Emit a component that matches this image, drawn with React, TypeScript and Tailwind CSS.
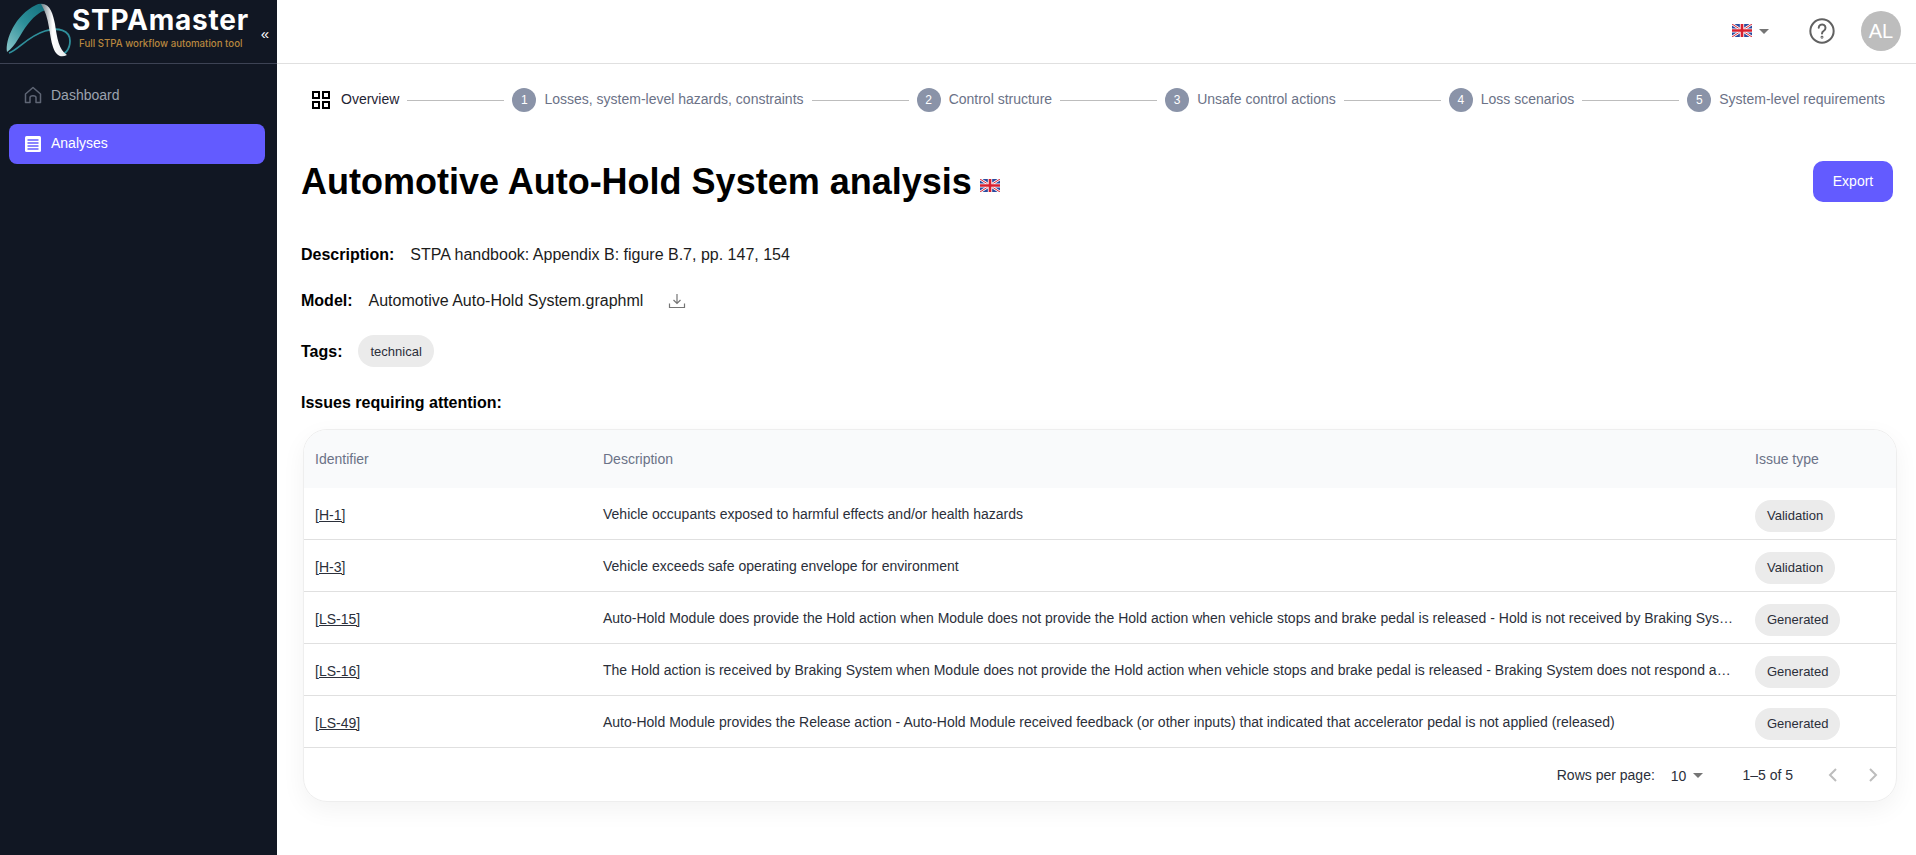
import React from "react";

const Flag = ({ w = 20, h = 13 }: { w?: number; h?: number }) => (
  <svg width={w} height={h} viewBox="0 0 60 40" preserveAspectRatio="none" className="block shrink-0">
    <rect width="60" height="40" fill="#2b4a9e" />
    <path d="M0 0L60 40M60 0L0 40" stroke="#fff" strokeWidth="8" />
    <path d="M0 0L60 40M60 0L0 40" stroke="#d8202f" strokeWidth="3" />
    <path d="M30 0V40M0 20H60" stroke="#fff" strokeWidth="13" />
    <path d="M30 0V40M0 20H60" stroke="#d8202f" strokeWidth="8" />
  </svg>
);

const Logo = () => (
  <div className="flex items-start h-full">
    <svg width="72" height="60" viewBox="0 0 72 60" className="block shrink-0">
      <defs>
        <linearGradient id="lg1" x1="0" y1="1" x2="1" y2="0">
          <stop offset="0" stopColor="#8cc8cb" />
          <stop offset="0.5" stopColor="#2d8f99" />
          <stop offset="1" stopColor="#0f6a78" />
        </linearGradient>
        <linearGradient id="lg2" x1="0" y1="0" x2="1" y2="0">
          <stop offset="0" stopColor="#6f7c84" />
          <stop offset="0.45" stopColor="#ffffff" />
          <stop offset="1" stopColor="#e4e8ea" />
        </linearGradient>
      </defs>
      <path d="M9 53C18 50 28 36 45 31C58 27 70 30 70 41C70 50 64 55 60 55" fill="none" stroke="#2f8f9b" strokeWidth="1.8" />
      <path d="M7 52C5 40 15 15 36 5C40 3 46 3 50 10C44 9 36 14 28 24C20 34 16 46 7 52Z" fill="url(#lg1)" />
      <path d="M41 4C50 3 53 14 55 24C57 38 59 50 67 55C61 58 56 56 53 47C49 36 50 18 41 4Z" fill="url(#lg2)" />
    </svg>
    <div className="flex flex-col pt-[6px] font-['Inter',sans-serif]">
      <span className="text-[28px] font-bold text-white tracking-[0.75px] leading-[28px] whitespace-nowrap">STPAmaster</span>
      <span className="text-[9.7px] font-medium text-[#b8873f] mt-[4px] ml-[7px] leading-[12px] whitespace-nowrap">Full STPA workflow automation tool</span>
    </div>
  </div>
);

const steps = [
  "Losses, system-level hazards, constraints",
  "Control structure",
  "Unsafe control actions",
  "Loss scenarios",
  "System-level requirements",
];

const Stepper = () => (
  <div className="flex items-center h-[24px] pl-[311px] pr-[31px]">
    <svg width="20" height="20" viewBox="0 0 20 20" className="shrink-0" fill="none" stroke="#000" strokeWidth="2">
      <rect x="2" y="2" width="6" height="6" />
      <rect x="12" y="2" width="6" height="6" />
      <rect x="2" y="12" width="6" height="6" />
      <rect x="12" y="12" width="6" height="6" />
    </svg>
    <span className="ml-[10px] -mt-[2px] text-sm text-[#1f2433] whitespace-nowrap">Overview</span>
    {steps.map((s, i) => (
      <React.Fragment key={s}>
        <div className="flex-1 h-px bg-[#bdbdbd] mx-[8px]" />
        <div className="w-[24px] h-[24px] rounded-full bg-[#8a93a8] text-white text-xs flex items-center justify-center shrink-0">{i + 1}</div>
        <span className="ml-[8px] -mt-[2px] text-sm text-[#6b7287] whitespace-nowrap">{s}</span>
      </React.Fragment>
    ))}
  </div>
);

const rows = [
  ["[H-1]", "Vehicle occupants exposed to harmful effects and/or health hazards", "Validation"],
  ["[H-3]", "Vehicle exceeds safe operating envelope for environment", "Validation"],
  ["[LS-15]", "Auto-Hold Module does provide the Hold action when Module does not provide the Hold action when vehicle stops and brake pedal is released - Hold is not received by Braking System when vehicle stops and brake pedal is released", "Generated"],
  ["[LS-16]", "The Hold action is received by Braking System when Module does not provide the Hold action when vehicle stops and brake pedal is released - Braking System does not respond adequately to the Hold action when it is received", "Generated"],
  ["[LS-49]", "Auto-Hold Module provides the Release action - Auto-Hold Module received feedback (or other inputs) that indicated that accelerator pedal is not applied (released)", "Generated"],
];

const Chip = ({ children }: { children: React.ReactNode }) => (
  <span className="inline-flex items-center h-[32px] px-[12px] pt-[1px] rounded-full bg-[#ebebeb] text-[13px] text-[#2b2f3a] whitespace-nowrap">{children}</span>
);

export default function App() {
  return (
    <div className="flex h-[855px] w-[1916px] overflow-hidden bg-white font-['Liberation_Sans',Arial,sans-serif]">
      <aside className="w-[277px] shrink-0 bg-[#111723] flex flex-col">
        <div className="h-[64px] border-b border-[#3d4354] flex items-center justify-between pr-[8px]">
          <Logo />
          <span className="text-white text-[15px] leading-none pt-[3px]">«</span>
        </div>
        <nav className="flex flex-col gap-[9px] pl-[9px] pr-[12px] pt-[11px]">
          <a className="h-[40px] flex items-center gap-[9px] px-[15px] text-sm text-[#9ca3af]">
            <svg width="18" height="18" viewBox="0 0 18 18" fill="none" stroke="#5f6675" strokeWidth="1.5" strokeLinejoin="round" className="shrink-0">
              <path d="M1.5 8L9 1.5L16.5 8V16.5H12V11.5C12 9 6 9 6 11.5V16.5H1.5Z" />
            </svg>
            Dashboard
          </a>
          <a className="h-[40px] flex items-center gap-[9px] px-[15px] text-sm text-white bg-[#635bff] rounded-[8px]">
            <svg width="18" height="18" viewBox="0 0 18 18" className="shrink-0">
              <rect x="1" y="1" width="16" height="16" rx="1.5" fill="#fff" />
              <path d="M3.5 5H14.5M3.5 8H14.5M3.5 11H14.5M3.5 14H14.5" stroke="#635bff" strokeWidth="1.3" />
            </svg>
            <span className="-mt-[2px]">Analyses</span>
          </a>
        </nav>
      </aside>
      <div className="flex-1 min-w-0 flex flex-col -ml-[277px] pl-[277px]">
        <header className="h-[64px] shrink-0 border-b border-[#e0e0e0] flex items-center justify-end pr-[15px] pb-[2px]">
          <span className="-mt-[1px]"><Flag /></span>
          <svg width="10" height="5" viewBox="0 0 10 5" className="ml-[7px] mt-[1px]"><path d="M0 0H10L5 5Z" fill="#757575" /></svg>
          <svg width="28" height="28" viewBox="0 0 24 24" className="ml-[39px]" fill="none" stroke="#616161" strokeWidth="1.7" strokeLinecap="round">
            <circle cx="12" cy="12" r="10" />
            <path d="M9.2 9.3a2.9 2.9 0 1 1 4.4 2.5c-1 .6-1.6 1.2-1.6 2.4" />
            <circle cx="12" cy="17.4" r="0.4" />
          </svg>
          <div className="ml-[25px] w-[40px] h-[40px] rounded-full bg-[#bdbdbd] text-white text-xl flex items-center justify-center">AL</div>
        </header>
        <main className="flex-1 min-w-0 flex flex-col">
          <div className="-ml-[277px] pt-[24px]"><Stepper /></div>
          <div className="pl-[24px] pr-[23px] pt-[49px]">
            <div className="flex items-center justify-between h-[41px]">
              <div className="flex items-center">
                <h1 className="text-[36px] font-bold text-black leading-none whitespace-nowrap">Automotive Auto-Hold System analysis</h1>
                <span className="ml-[8px] mt-[7px]"><Flag /></span>
              </div>
              <button className="w-[80px] h-[41px] pb-[2px] rounded-[10px] bg-[#635bff] text-white text-sm">Export</button>
            </div>
            <div className="flex items-center text-base text-[#1c1c1c] mt-[41px] h-[24px]">
              <b className="font-bold text-black">Description:</b>
              <span className="ml-[16px]">STPA handbook: Appendix B: figure B.7, pp. 147, 154</span>
            </div>
            <div className="flex items-center text-base text-[#1c1c1c] mt-[22px] h-[24px]">
              <b className="font-bold text-black">Model:</b>
              <span className="ml-[16px]">Automotive Auto-Hold System.graphml</span>
              <svg width="18" height="18" viewBox="0 0 18 18" className="ml-[25px]" fill="none" stroke="#757575" strokeWidth="1.2">
                <path d="M9 2V11M5.5 8L9 11.5L12.5 8M1.5 11.5V15.5H16.5V11.5" />
              </svg>
            </div>
            <div className="flex items-center text-base mt-[22px] h-[32px]">
              <b className="font-bold text-black mr-[16px] mt-[1px]">Tags:</b>
              <Chip>technical</Chip>
            </div>
            <div className="text-base font-bold text-black mt-[24px] h-[24px] leading-[24px]">Issues requiring attention:</div>
            <div className="mt-[14px] ml-[2px] w-[1594px] rounded-[24px] border border-[#eeeeee] shadow-[0_8px_24px_rgba(0,0,0,0.05)] overflow-hidden">
              <div className="grid grid-cols-[288px_1152px_1fr] h-[58px] items-center bg-[#f9fafb] text-sm text-[#6b7287]">
                <div className="px-[11px]">Identifier</div>
                <div className="px-[11px]">Description</div>
                <div className="px-[11px]">Issue type</div>
              </div>
              {rows.map((r) => (
                <div key={r[0]} className="grid grid-cols-[288px_1152px_1fr] h-[52px] items-center border-b border-[#e0e0e0] text-sm text-[#2b2f3a]">
                  <div className="px-[11px] underline pt-[2px]">{r[0]}</div>
                  <div className="px-[11px] truncate">{r[1]}</div>
                  <div className="px-[11px] pt-[4px]"><Chip>{r[2]}</Chip></div>
                </div>
              ))}
              <div className="h-[53px] flex items-center justify-end text-sm text-[#2b2f3a] pr-[11px]">
                <span>Rows per page:</span>
                <span className="ml-[16px] mt-[2px]">10</span>
                <svg width="10" height="5" viewBox="0 0 10 5" className="ml-[7px] mt-[2px]"><path d="M0 0H10L5 5Z" fill="#757575" /></svg>
                <span className="ml-[39px]">1–5 of 5</span>
                <svg width="24" height="24" viewBox="0 0 24 24" className="ml-[28px]" fill="none" stroke="#bdbdbd" strokeWidth="2"><path d="M15 6L9 12L15 18" /></svg>
                <svg width="24" height="24" viewBox="0 0 24 24" className="ml-[16px]" fill="none" stroke="#bdbdbd" strokeWidth="2"><path d="M9 6L15 12L9 18" /></svg>
              </div>
            </div>
          </div>
        </main>
      </div>
    </div>
  );
}
